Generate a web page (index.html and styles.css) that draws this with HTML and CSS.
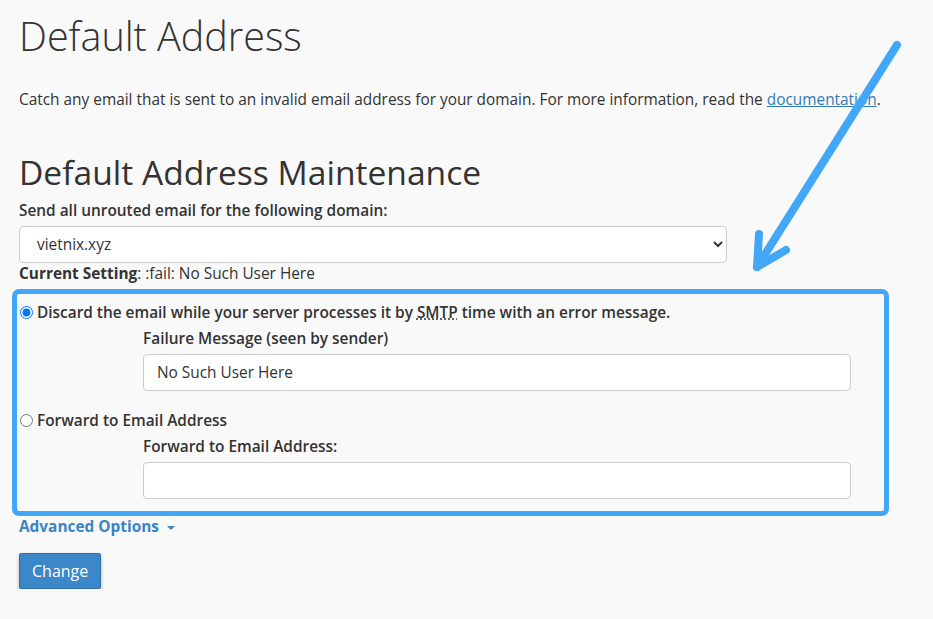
FILE: index.html
```
<!DOCTYPE html>
<html lang="en">
<head>
    <meta charset="UTF-8">
    <meta name="viewport" content="width=device-width, initial-scale=1.0">
    <title>Default Address</title>
    <link rel="stylesheet" href="styles.css">
</head>
<body>
    <main class="page">
        <h1>Default Address</h1>
        <p class="intro">Catch any email that is sent to an invalid email address for your domain. For more information, read the <a href="#">documentation</a>.</p>

        <h2>Default Address Maintenance</h2>
        <form class="default-form">
            <label class="field-label top-label" for="domain">Send all unrouted email for the following domain:</label>
            <select id="domain" class="field">
                <option>vietnix.xyz</option>
            </select>
            <div class="current">
                <strong>Current Setting</strong>: :fail: No Such User Here
            </div>

            <!-- highlighted options -->
            <div class="highlight">
                <label class="option">
                    <input type="radio" name="action" checked>
                    <span>Discard the email while your server processes it by <abbr title="Simple Mail Transfer Protocol">SMTP</abbr> time with an error message.</span>
                </label>
                <div class="sub">
                    <label class="field-label" for="fail-msg">Failure Message (seen by sender)</label>
                    <input type="text" id="fail-msg" class="field" value="No Such User Here">
                </div>

                <label class="option">
                    <input type="radio" name="action">
                    <span>Forward to Email Address</span>
                </label>
                <div class="sub last">
                    <label class="field-label" for="fwd">Forward to Email Address:</label>
                    <input type="text" id="fwd" class="field">
                </div>
            </div>

            <a href="#" class="advanced">Advanced Options <span class="caret"></span></a>

            <button type="button" class="btn">Change</button>
        </form>
    </main>

    <!-- annotation arrow -->
    <svg class="arrow" width="933" height="619" viewBox="0 0 933 619">
        <g fill="none" stroke="#41a7f6" stroke-width="8" stroke-linecap="round" stroke-linejoin="round">
            <path d="M897 45 L757 267"/>
            <path d="M759 234 L757 267 L786 250"/>
        </g>
    </svg>
</body>
</html>
```

FILE: styles.css
```
* {
    margin: 0;
    padding: 0;
    box-sizing: border-box;
}

body {
    background-color: #f9f9f9;
    color: #333;
    font-family: 'Open Sans', 'Noto Sans', sans-serif;
    font-size: 15.4px;
    line-height: 22px;
}

.page {
    position: relative;
    padding: 8px 19px 0;
}

h1 {
    font-size: 39.5px;
    font-weight: 300;
    line-height: 56px;
}

.intro {
    margin-top: 25px;
}

.intro a {
    color: #337ab7;
}

h2 {
    margin-top: 41px;
    font-size: 33.6px;
    font-weight: 400;
    line-height: 40px;
}

.field-label {
    display: block;
    font-weight: 600;
    margin-bottom: 4px;
}

.top-label {
    margin-top: 8px;
}

.field {
    display: block;
    width: 708px;
    height: 37px;
    padding: 6px 13px;
    border: 1px solid #ccc;
    border-radius: 4px;
    background-color: #fff;
    color: #333;
    font-family: inherit;
    font-size: 15.4px;
}

select.field {
    padding-left: 13px;
}

.current {
    line-height: 21px;
}

.highlight {
    position: relative;
    margin-top: 5px;
    padding: 13px 0 17px;
}

.highlight::before {
    content: "";
    position: absolute;
    top: 0;
    bottom: 0;
    left: -7px;
    right: 25px;
    border: 5px solid #41a7f6;
    border-radius: 7px;
}

.option {
    display: flex;
    align-items: flex-start;
    gap: 4px;
    font-weight: 600;
}

.option input {
    margin: 4px 0 0 1px;
}

abbr {
    text-decoration: underline dotted;
}

.sub {
    margin: 4px 0 19px 124px;
}

.sub.last {
    margin-bottom: 0;
}

.advanced {
    display: inline-block;
    margin-top: -2px;
    color: #3884c6;
    font-weight: 700;
    text-decoration: none;
}

.caret {
    display: inline-block;
    margin-left: 4px;
    vertical-align: middle;
    border-top: 4px solid;
    border-left: 4px solid transparent;
    border-right: 4px solid transparent;
}

.btn {
    display: block;
    margin-top: 15px;
    height: 36px;
    padding: 0 12px;
    background-color: #3c87c9;
    color: #fff;
    border: 1px solid #2f6fa8;
    border-radius: 2px;
    font-family: inherit;
    font-size: 16px;
    box-shadow: 0 2px 4px rgba(0,0,0,0.25);
    cursor: pointer;
}

.arrow {
    position: absolute;
    top: 0;
    left: 0;
    pointer-events: none;
}
```
